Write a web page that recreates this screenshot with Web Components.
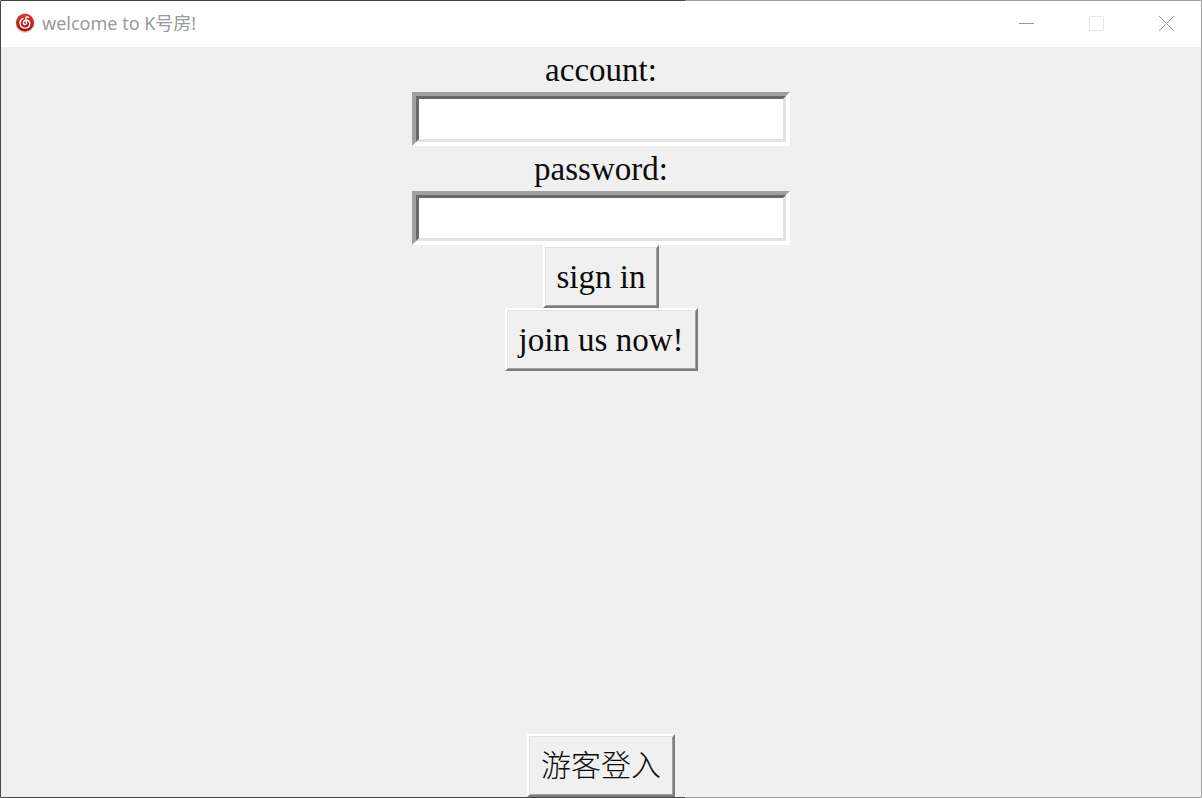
<!DOCTYPE html>
<html lang="zh-CN">
<head>
<meta charset="utf-8">
<title>welcome to K号房!</title>
<style>
html, body { height: 100%; margin: 0; }
body { background: #f0f0f0; font-family: "Liberation Serif", "Noto Sans CJK SC", serif; color: #0c0c0c; }
</style>
</head>
<body>
<app-window>
  <title-bar slot="title">welcome to K号房!</title-bar>
  <form-field name="account" type="text">account:</form-field>
  <form-field name="password" type="password">password:</form-field>
  <raised-button>sign in</raised-button>
  <raised-button>join us now!</raised-button>
  <raised-button slot="footer" class="guest">游客登入</raised-button>
</app-window>
<script>
class BaseElement extends HTMLElement {
  constructor() {
    super();
    this.attachShadow({ mode: "open" }).innerHTML = this.constructor.markup;
  }
}

class AppWindow extends BaseElement {
  static markup = `
    <style>
      :host { display: flex; flex-direction: column; box-sizing: border-box; min-height: 100%;
        border: 1px solid transparent; border-left-color: #45454a; border-right-color: #a0a0a3;
        background: linear-gradient(#f0f0f0, #f0f0f0) padding-box,
          linear-gradient(90deg, #45454a 57%, #a0a0a3 57%) border-box; }
      main { flex: 1; display: flex; flex-direction: column; align-items: center; }
      footer { display: flex; justify-content: center; }
    </style>
    <slot name="title"></slot>
    <main><slot></slot></main>
    <footer><slot name="footer"></slot></footer>`;
  connectedCallback() {
    this.style.height = "100%";
  }
}

class TitleBar extends BaseElement {
  static markup = `
    <style>
      :host { display: flex; align-items: center; box-sizing: border-box; height: 46px; padding-bottom: 2px;
        background: #fff; color: #999; font: 18px/24px "Noto Sans", "Noto Sans CJK SC", sans-serif; }
      .logo { width: 20px; height: 20px; margin: 0 7px 0 14px; }
      h1 { flex: 1; margin: 0; font-size: inherit; font-weight: 400; white-space: nowrap; }
      button { width: 70px; height: 44px; padding: 0; border: 0; background: none; display: grid; place-items: center; }
      button svg { width: 15px; height: 15px; fill: none; stroke: #999; }
      button:disabled svg { stroke: #e6e6e6; }
    </style>
    <svg class="logo" viewBox="0 0 20 20" aria-hidden="true">
      <defs><linearGradient id="g" x1="0" y1="0" x2="0" y2="1"><stop stop-color="#e23a37"/><stop offset="1" stop-color="#ad0909"/></linearGradient></defs>
      <circle cx="10" cy="10.500" r="9.500" fill="#d5d5d5"/>
      <circle cx="10" cy="9.500" r="9" fill="url(#g)"/>
      <path d="M13.500 4.300C12.300 3.500 10.800 4 10.900 5.400L11.500 9.800C11.700 12 8.500 12.200 8.400 9.900C8.300 7.800 10.400 6.900 12 7.300C16 8.300 15.700 15.100 10.300 15.100C4.200 15.100 3.300 7.800 8 5.600" fill="none" stroke="#fff" stroke-width="1.400" stroke-linecap="round"/>
    </svg>
    <h1><slot></slot></h1>
    <button type="button" aria-label="Minimize"><svg viewBox="0 0 15 15"><path d="M0 7.500H15"/></svg></button>
    <button type="button" aria-label="Maximize" disabled><svg viewBox="0 0 15 15"><path d="M.5.5h14v14H.5z"/></svg></button>
    <button type="button" aria-label="Close"><svg viewBox="0 0 15 15"><path d="M0 0L15 15M15 0L0 15"/></svg></button>`;
}

class FormField extends BaseElement {
  static markup = `
    <style>
      :host { display: flex; flex-direction: column; align-items: center; width: 378px; max-width: 100%; }
      label { font-size: 33px; line-height: 43px; padding-top: 2px; }
      .frame { box-sizing: border-box; width: 100%; border: 4px solid; border-color: #a0a0a0 #fff #fff #a0a0a0; }
      input { display: block; box-sizing: border-box; width: 100%; height: 46px; padding: 0 4px; margin: 0;
        border: 3px solid; border-color: #696969 #e3e3e3 #e3e3e3 #696969; border-radius: 0;
        outline: 0; background: #fff; color: inherit; font: inherit; font-size: 30px; }
    </style>
    <label for="control"><slot></slot></label>
    <div class="frame"><input id="control"></div>`;
  connectedCallback() {
    const input = this.shadowRoot.querySelector("input");
    input.type = this.getAttribute("type");
    input.name = this.getAttribute("name");
  }
}

class RaisedButton extends BaseElement {
  static markup = `
    <style>
      :host { display: block; }
      button { display: block; height: 63px; padding: 2px 12px 0; border: 2px solid; border-radius: 0;
        border-color: #fff #7c7c7c #7c7c7c #fff; box-shadow: inset 1px 1px #e3e3e3, inset -1px -1px #a0a0a0;
        background: #f0f0f0; color: inherit; font: inherit; font-size: 33px; line-height: 45px; }
      :host(.guest) button { padding-top: 0; font-size: 30px; font-weight: 300; }
    </style>
    <button type="button"><slot></slot></button>`;
}

customElements.define("app-window", AppWindow);
customElements.define("title-bar", TitleBar);
customElements.define("form-field", FormField);
customElements.define("raised-button", RaisedButton);
</script>
</body>
</html>
